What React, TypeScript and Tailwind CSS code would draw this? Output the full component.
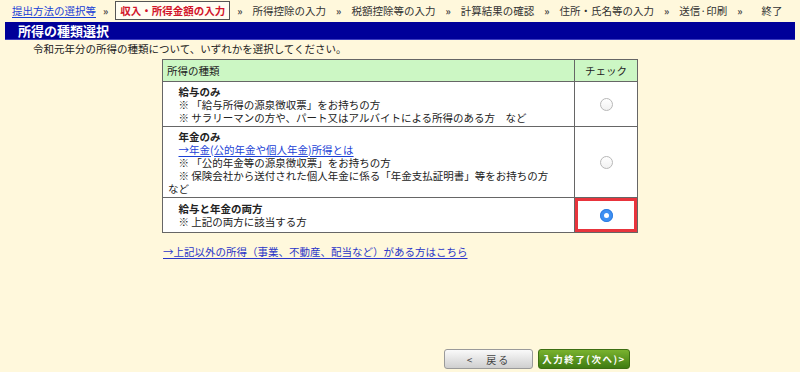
import React from "react";

const font = "font-['Noto_Sans_CJK_JP','Noto_Sans_CJK_SC',sans-serif]";

function Radio({ checked = false }: { checked?: boolean }) {
    if (checked) {
        return (
            <span className="flex h-[13px] w-[13px] items-center justify-center rounded-full bg-[#3d8ff2] shadow-[inset_0_0_0_1px_#2f7de0]">
                <span className="h-[5px] w-[5px] rounded-full bg-white" />
            </span>
        );
    }
    return <span className="block h-[13px] w-[13px] rounded-full border border-[#b8b8b8] bg-gradient-to-b from-white to-[#f1f1f1]" />;
}

function Sep({ className = "" }: { className?: string }) {
    return <span className={`text-[10px] font-bold text-[#444] ${className}`}>»</span>;
}

export default function App() {
    const steps = ["所得控除の入力", "税額控除等の入力", "計算結果の確認", "住所・氏名等の入力", "送信·印刷"];

    return (
        <div className={`min-h-screen w-[800px] bg-[#fff8dc] text-[10.5px] leading-[13px] text-[#222] ${font}`}>
            {/* Step navigation */}
            <div className="flex h-[21px] items-center pl-[12px]">
                <a href="#" className="text-[#1a3fd6] underline underline-offset-2">提出方法の選択等</a>
                <Sep className="mx-[7px]" />
                <span className="border border-[#555] bg-[#fffdf2] px-[4px] py-[2px] font-bold text-[#d2142a]">収入・所得金額の入力</span>
                <Sep className="ml-[7px] mr-[10px]" />
                {steps.map((s) => (
                    <React.Fragment key={s}>
                        <span className="text-[#333]">{s}</span>
                        <Sep className="mx-[10px]" />
                    </React.Fragment>
                ))}
                <span className="ml-[9px] text-[#333]">終了</span>
            </div>

            {/* Title bar */}
            <div className="mx-[5px] mt-[1px] flex h-[18px] items-center border-b border-[#3c3cc0] bg-[#000099] pl-[13px]">
                <span className="text-[13px] font-bold leading-[13px] text-white">所得の種類選択</span>
            </div>

            <p className="mt-[2px] pl-[33px]">令和元年分の所得の種類について、いずれかを選択してください。</p>

            {/* Income type table */}
            <table className="mx-auto mt-[4px] w-[475px] table-fixed border-collapse border border-[#666]">
                <colgroup>
                    <col className="w-[412px]" />
                    <col className="w-[63px]" />
                </colgroup>
                <thead>
                    <tr className="h-[22px] bg-[#ccf7c4]">
                        <th className="border border-[#666] px-[4px] text-left font-normal">所得の種類</th>
                        <th className="border border-[#666] text-center font-normal">チェック</th>
                    </tr>
                </thead>
                <tbody className="bg-white">
                    <tr className="h-[45px]">
                        <td className="border border-[#666] px-[5px] py-[1px]">
                            <div className="font-bold">　給与のみ</div>
                            <div>　※ 「給与所得の源泉徴収票」をお持ちの方</div>
                            <div>　※ サラリーマンの方や、パート又はアルバイトによる所得のある方　など</div>
                        </td>
                        <td className="border border-[#666]">
                            <div className="flex justify-center"><Radio /></div>
                        </td>
                    </tr>
                    <tr className="h-[71px]">
                        <td className="border border-[#666] px-[5px] py-[1px]">
                            <div className="font-bold">　年金のみ</div>
                            <div>　<a href="#" className="text-[#1a3fd6] underline underline-offset-2">→年金(公的年金や個人年金)所得とは</a></div>
                            <div>　※ 「公的年金等の源泉徴収票」をお持ちの方</div>
                            <div>　※ 保険会社から送付された個人年金に係る「年金支払証明書」等をお持ちの方</div>
                            <div>など</div>
                        </td>
                        <td className="border border-[#666]">
                            <div className="flex justify-center"><Radio /></div>
                        </td>
                    </tr>
                    <tr className="h-[35px]">
                        <td className="border border-[#666] px-[5px] py-[1px]">
                            <div className="font-bold">　給与と年金の両方</div>
                            <div>　※ 上記の両方に該当する方</div>
                        </td>
                        <td className="border border-[#666] p-0">
                            <div className="flex h-[34px] items-center justify-center border-[3px] border-[#e8343c]">
                                <Radio checked />
                            </div>
                        </td>
                    </tr>
                </tbody>
            </table>

            <div className="mt-[12px] pl-[163px]">
                <a href="#" className="text-[#2a35c8] underline underline-offset-2">→上記以外の所得（事業、不動産、配当など）がある方はこちら</a>
            </div>

            {/* Buttons */}
            <div className="mt-[91px] flex gap-[5px] pl-[444px]">
                <button className="flex h-[20px] w-[89px] items-center justify-center rounded-[3px] border border-[#9a9a9a] bg-gradient-to-b from-[#fafafa] to-[#cfcfcf] text-[10px] tracking-[2px] text-[#444]">
                    &lt;　戻る
                </button>
                <button className="flex h-[20px] w-[92px] items-center justify-center rounded-[3px] border border-[#3d6e12] bg-gradient-to-b from-[#79b22e] to-[#3f7c12] text-[9.5px] font-bold tracking-[1.5px] text-white">
                    入力終了(次へ)&gt;
                </button>
            </div>
        </div>
    );
}
